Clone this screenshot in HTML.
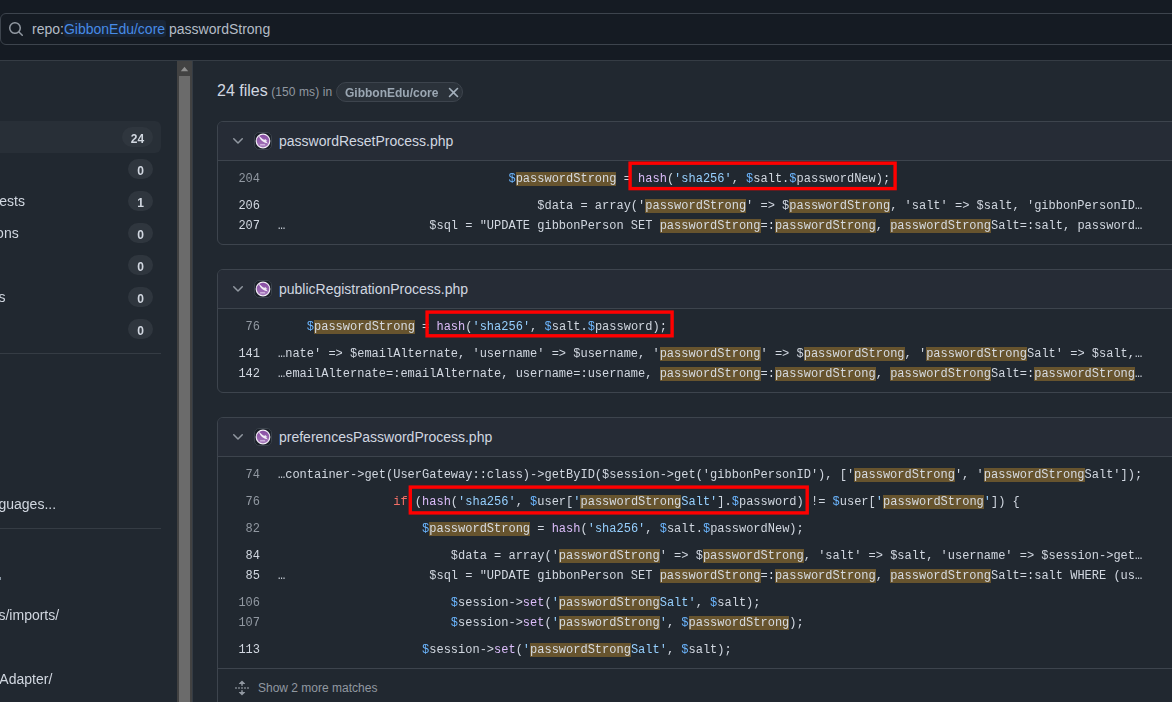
<!DOCTYPE html>
<html lang="en">
<head>
<meta charset="utf-8">
<title>Code search results</title>
<style>
*{box-sizing:border-box;margin:0;padding:0}
html,body{width:1172px;height:702px;overflow:hidden;background:#212830}
body{position:relative;font-family:"Liberation Sans",Arial,sans-serif;font-size:14px;color:#d1d7e0}
.abs{position:absolute}
/* header */
#hdr{left:0;top:0;width:1172px;height:61px;background:#151b23;border-bottom:1px solid #353c44}
#search{left:0;top:13px;width:1400px;height:32px;border:1px solid #3d444d;border-radius:6px;background:#151b23}
#qtext{left:32px;top:13px;height:32px;line-height:32px;font-size:14px;white-space:pre;color:#b4bcc6}
#qtext .tok{color:#478be6}
#tokbg{left:63.5px;top:20px;width:102px;height:17px;border-radius:3px;background:#192536}
/* sidebar */
#sel{left:-100px;top:121px;width:261px;height:32px;border-radius:6px;background:#282f37}
.cnt{height:20px;border-radius:10px;background:#2f363e}
.cnt span{display:block;line-height:20px;color:#d1d7e0;font-size:12px;font-weight:bold;text-align:center;will-change:transform;transform:translateY(1.5px)}
.lbl{white-space:nowrap;font-size:14px;line-height:20px;color:#d1d7e0;text-align:right;will-change:transform;transform:translateY(-0.4px)}
.hr{height:1px;background:#353c44}
/* scrollbar */
#track{left:177px;top:61px;width:15px;height:641px;background:#424242}
#thumb{left:179px;top:76px;width:11px;height:640px;background:#6b6b6b}
#vline{left:192px;top:61px;width:1px;height:641px;background:#353c44}
/* results */
.box{left:217px;width:1000px;border:1px solid #3d444d;border-radius:6px}
.bh{left:0;top:0;width:100%;height:39px;border-bottom:1px solid #3d444d;background:#262c36;border-radius:5px 5px 0 0}
.fname{left:61px;top:9px;line-height:20px;font-size:14px;color:#d1d7e0;white-space:nowrap}
.ln,.cl{will-change:transform}
.ln{left:0;width:42px;text-align:right;font:12px/20px "Liberation Mono",monospace;color:#d1d7e0}
.ln.d{color:#9198a1}
.cl{left:60px;white-space:pre;font:12px/20px "Liberation Mono",monospace;color:#d1d7e0}
.cl mark{background:#67542e;color:#d6dbe2}
.b{color:#6cb6ff}.p{color:#dcbdfb}.s{color:#96d0ff}.k{color:#f47067}
.red{border:3px solid #ff0000}
</style>
</head>
<body>
<!-- header -->
<div id="hdr" class="abs"></div>
<div id="search" class="abs"></div>
<svg class="abs" style="left:8px;top:21px" width="16" height="16" viewBox="0 0 16 16"><path fill="#9198a1" d="M10.68 11.74a6 6 0 0 1-7.922-8.982 6 6 0 0 1 8.982 7.922l3.04 3.04a.749.749 0 0 1-.326 1.275.749.749 0 0 1-.734-.215ZM11.5 7a4.499 4.499 0 1 0-8.997 0A4.499 4.499 0 0 0 11.5 7Z"/></svg>
<div id="tokbg" class="abs"></div>
<div id="qtext" class="abs">repo:<span class="tok">GibbonEdu/core</span> passwordStrong</div>

<!-- sidebar -->
<div id="sel" class="abs"></div>
<div class="abs lbl" style="right:1147.5px;top:191px">Pull requests</div>
<div class="abs lbl" style="right:1153.5px;top:223px">Discussions</div>
<div class="abs lbl" style="right:1167px;top:287px">Packages</div>
<div class="abs cnt" style="left:122px;top:127px;width:31px"><span>24</span></div>
<div class="abs cnt" style="left:128px;top:159px;width:25px"><span>0</span></div>
<div class="abs cnt" style="left:128px;top:191px;width:25px"><span>1</span></div>
<div class="abs cnt" style="left:128px;top:223px;width:25px"><span>0</span></div>
<div class="abs cnt" style="left:128px;top:255px;width:25px"><span>0</span></div>
<div class="abs cnt" style="left:128px;top:287px;width:25px"><span>0</span></div>
<div class="abs cnt" style="left:128px;top:319px;width:25px"><span>0</span></div>
<div class="abs hr" style="left:-100px;top:353px;width:261px"></div>
<div class="abs lbl" style="right:1116px;top:494px">More languages...</div>
<div class="abs hr" style="left:-100px;top:528px;width:261px"></div>
<div class="abs lbl" style="right:1173px;top:566px">src/</div>
<div class="abs" style="left:0;top:577px;width:1px;height:3px;background:#8a96a2"></div>
<div class="abs lbl" style="right:1113px;top:605px">resources/imports/</div>
<div class="abs lbl" style="right:1120px;top:669px">src/Database/Adapter/</div>

<!-- scrollbar -->
<div id="track" class="abs"></div>
<div id="thumb" class="abs"></div>
<svg class="abs" style="left:177px;top:61px" width="15" height="15" viewBox="0 0 15 15"><path fill="#8f8f8f" d="M3.8 10.2 L7.5 5.7 L11.2 10.2 Z"/></svg>
<div id="vline" class="abs"></div>

<!-- results summary -->
<div class="abs" style="left:217px;top:79px;line-height:24px;white-space:nowrap"><span style="font-size:16px;color:#d1d7e0">24 files</span><span style="font-size:12px;color:#9198a1;letter-spacing:.1px"> (150 ms) in</span></div>
<div class="abs" style="left:336px;top:82px;width:127px;height:20px;border:1px solid #3d444d;border-radius:10px;background:#2b323a"></div>
<div class="abs" style="left:345px;top:82px;line-height:20px;font-size:12px;font-weight:bold;color:#9ba7b3;white-space:nowrap;will-change:transform;transform:translateY(0.5px)">GibbonEdu/core</div>
<svg class="abs" style="left:444.85px;top:83.9px" width="17" height="17" viewBox="0 0 16 16"><path fill="#a3afbb" d="M3.72 3.72a.75.75 0 0 1 1.06 0L8 6.94l3.22-3.22a.749.749 0 0 1 1.275.326.749.749 0 0 1-.215.734L9.06 8l3.22 3.22a.749.749 0 0 1-.326 1.275.749.749 0 0 1-.734-.215L8 9.06l-3.22 3.22a.751.751 0 0 1-1.042-.018.751.751 0 0 1-.018-1.042L6.94 8 3.72 4.78a.75.75 0 0 1 0-1.06Z"/></svg>

<!-- BOX1 -->
<div class="abs box" style="top:121px;height:124px">
<div class="abs bh"></div><svg class="abs" style="left:12px;top:11px" width="16" height="16" viewBox="0 0 16 16"><path fill="#9198a1" d="M12.78 5.22a.749.749 0 0 1 0 1.06l-4.25 4.25a.749.749 0 0 1-1.06 0L3.22 6.28a.749.749 0 1 1 1.06-1.06L8 8.939l3.72-3.719a.749.749 0 0 1 1.06 0Z"/></svg><svg class="abs" style="left:36px;top:10px" width="18" height="18" viewBox="0 0 18 18"><defs><linearGradient id="gP121" x1="0" y1="0" x2="0" y2="1"><stop offset="0" stop-color="#874aa2"/><stop offset="1" stop-color="#a67abb"/></linearGradient></defs><rect x="0.5" y="0.5" width="17" height="17" rx="4.5" fill="#1b2129" stroke="#3a424b"/><circle cx="9" cy="9" r="6.800" fill="url(#gP121)" stroke="#f1ebf5" stroke-width="1.200"/><path d="M4.700 3.800C6.600 5 8 6.600 9.300 7.600C10.300 7.900 11.200 7.600 12.200 7.100L11.700 8.200L13.300 8.400L12.200 9.400C12.800 10.100 13.400 10.800 14 11.400C10 10.900 6.400 8.600 4.700 3.800Z" fill="#f2edf6"/><rect x="6" y="12.100" width="5.200" height="1.300" rx=".5" fill="#cdb0dc"/></svg><div class="abs fname">passwordResetProcess.php</div>
<div class="abs ln d" style="top:47px">204</div><div class="abs cl" style="top:47px">                                <span class="b">$</span><mark>passwordStrong</mark> = <span class="p">hash</span>(<span class="s">'sha256'</span>, <span class="b">$</span>salt.<span class="b">$</span>passwordNew);</div>
<div class="abs ln" style="top:74px">206</div><div class="abs cl" style="top:74px">                                    $data = array('<mark>passwordStrong</mark>' =&gt; $<mark>passwordStrong</mark>, 'salt' =&gt; $salt, 'gibbonPersonID…</div>
<div class="abs ln" style="top:94px">207</div><div class="abs cl" style="top:94px">…                    $sql = "UPDATE gibbonPerson SET <mark>passwordStrong</mark>=:<mark>passwordStrong</mark>, <mark>passwordStrong</mark>Salt=:salt, password…</div>
</div>
<!-- /BOX1 -->
<!-- BOX2 -->
<div class="abs box" style="top:269px;height:124px">
<div class="abs bh"></div><svg class="abs" style="left:12px;top:11px" width="16" height="16" viewBox="0 0 16 16"><path fill="#9198a1" d="M12.78 5.22a.749.749 0 0 1 0 1.06l-4.25 4.25a.749.749 0 0 1-1.06 0L3.22 6.28a.749.749 0 1 1 1.06-1.06L8 8.939l3.72-3.719a.749.749 0 0 1 1.06 0Z"/></svg><svg class="abs" style="left:36px;top:10px" width="18" height="18" viewBox="0 0 18 18"><defs><linearGradient id="gP269" x1="0" y1="0" x2="0" y2="1"><stop offset="0" stop-color="#874aa2"/><stop offset="1" stop-color="#a67abb"/></linearGradient></defs><rect x="0.5" y="0.5" width="17" height="17" rx="4.5" fill="#1b2129" stroke="#3a424b"/><circle cx="9" cy="9" r="6.800" fill="url(#gP269)" stroke="#f1ebf5" stroke-width="1.200"/><path d="M4.700 3.800C6.600 5 8 6.600 9.300 7.600C10.300 7.900 11.200 7.600 12.200 7.100L11.700 8.200L13.300 8.400L12.200 9.400C12.800 10.100 13.400 10.800 14 11.400C10 10.900 6.400 8.600 4.700 3.800Z" fill="#f2edf6"/><rect x="6" y="12.100" width="5.200" height="1.300" rx=".5" fill="#cdb0dc"/></svg><div class="abs fname">publicRegistrationProcess.php</div>
<div class="abs ln d" style="top:47px">76</div><div class="abs cl" style="top:47px">    <span class="b">$</span><mark>passwordStrong</mark> = <span class="p">hash</span>(<span class="s">'sha256'</span>, <span class="b">$</span>salt.<span class="b">$</span>password);</div>
<div class="abs ln" style="top:74px">141</div><div class="abs cl" style="top:74px">…nate' =&gt; $emailAlternate, 'username' =&gt; $username, '<mark>passwordStrong</mark>' =&gt; $<mark>passwordStrong</mark>, '<mark>passwordStrong</mark>Salt' =&gt; $salt,…</div>
<div class="abs ln" style="top:94px">142</div><div class="abs cl" style="top:94px">…emailAlternate=:emailAlternate, username=:username, <mark>passwordStrong</mark>=:<mark>passwordStrong</mark>, <mark>passwordStrong</mark>Salt=:<mark>passwordStrong</mark>…</div>
</div>
<!-- /BOX2 -->
<!-- BOX3 -->
<div class="abs box" style="top:417px;height:320px">
<div class="abs bh"></div><svg class="abs" style="left:12px;top:11px" width="16" height="16" viewBox="0 0 16 16"><path fill="#9198a1" d="M12.78 5.22a.749.749 0 0 1 0 1.06l-4.25 4.25a.749.749 0 0 1-1.06 0L3.22 6.28a.749.749 0 1 1 1.06-1.06L8 8.939l3.72-3.719a.749.749 0 0 1 1.06 0Z"/></svg><svg class="abs" style="left:36px;top:10px" width="18" height="18" viewBox="0 0 18 18"><defs><linearGradient id="gP417" x1="0" y1="0" x2="0" y2="1"><stop offset="0" stop-color="#874aa2"/><stop offset="1" stop-color="#a67abb"/></linearGradient></defs><rect x="0.5" y="0.5" width="17" height="17" rx="4.5" fill="#1b2129" stroke="#3a424b"/><circle cx="9" cy="9" r="6.800" fill="url(#gP417)" stroke="#f1ebf5" stroke-width="1.200"/><path d="M4.700 3.800C6.600 5 8 6.600 9.300 7.600C10.300 7.900 11.200 7.600 12.200 7.100L11.700 8.200L13.300 8.400L12.200 9.400C12.800 10.100 13.400 10.800 14 11.400C10 10.900 6.400 8.600 4.700 3.800Z" fill="#f2edf6"/><rect x="6" y="12.100" width="5.200" height="1.300" rx=".5" fill="#cdb0dc"/></svg><div class="abs fname">preferencesPasswordProcess.php</div>
<div class="abs ln d" style="top:47px">74</div><div class="abs cl" style="top:47px">…container-&gt;get(UserGateway::class)-&gt;getByID($session-&gt;get('gibbonPersonID'), ['<mark>passwordStrong</mark>', '<mark>passwordStrong</mark>Salt']);</div>
<div class="abs ln d" style="top:74px">76</div><div class="abs cl" style="top:74px">                <span class="k">if</span> (<span class="p">hash</span>(<span class="s">'sha256'</span>, <span class="b">$</span>user[<span class="s">'<mark>passwordStrong</mark>Salt'</span>].<span class="b">$</span>password) != <span class="b">$</span>user[<span class="s">'<mark>passwordStrong</mark>'</span>]) {</div>
<div class="abs ln d" style="top:101px">82</div><div class="abs cl" style="top:101px">                    <span class="b">$</span><mark>passwordStrong</mark> = <span class="p">hash</span>(<span class="s">'sha256'</span>, <span class="b">$</span>salt.<span class="b">$</span>passwordNew);</div>
<div class="abs ln" style="top:128px">84</div><div class="abs cl" style="top:128px">                        $data = array('<mark>passwordStrong</mark>' =&gt; $<mark>passwordStrong</mark>, 'salt' =&gt; $salt, 'username' =&gt; $session-&gt;get…</div>
<div class="abs ln" style="top:148px">85</div><div class="abs cl" style="top:148px">…                    $sql = "UPDATE gibbonPerson SET <mark>passwordStrong</mark>=:<mark>passwordStrong</mark>, <mark>passwordStrong</mark>Salt=:salt WHERE (us…</div>
<div class="abs ln d" style="top:175px">106</div><div class="abs cl" style="top:175px">                        <span class="b">$</span>session-&gt;<span class="p">set</span>(<span class="s">'<mark>passwordStrong</mark>Salt'</span>, <span class="b">$</span>salt);</div>
<div class="abs ln d" style="top:195px">107</div><div class="abs cl" style="top:195px">                        <span class="b">$</span>session-&gt;<span class="p">set</span>(<span class="s">'<mark>passwordStrong</mark>'</span>, <span class="b">$</span><mark>passwordStrong</mark>);</div>
<div class="abs ln" style="top:222px">113</div><div class="abs cl" style="top:222px">                    <span class="b">$</span>session-&gt;<span class="p">set</span>(<span class="s">'<mark>passwordStrong</mark>Salt'</span>, <span class="b">$</span>salt);</div>
<div class="abs" style="left:0;top:250px;width:100%;height:1px;background:#3d444d"></div><svg class="abs" style="left:16px;top:262px" width="16" height="16" viewBox="0 0 16 16"><path fill="#9198a1" d="m8.177.677 2.896 2.896a.25.25 0 0 1-.177.427H8.75v1.25a.75.75 0 0 1-1.500 0V4H5.104a.25.25 0 0 1-.177-.427L7.823.677a.25.25 0 0 1 .354 0ZM7.250 10.750a.75.75 0 0 1 1.500 0V12h2.146a.25.25 0 0 1 .177.427l-2.896 2.896a.25.25 0 0 1-.354 0l-2.896-2.896A.25.25 0 0 1 5.104 12H7.250v-1.250Zm-5-2a.75.75 0 0 0 0-1.500h-.5a.75.75 0 0 0 0 1.500h.5ZM6 8a.75.75 0 0 1-.75.75h-.5a.75.75 0 0 1 0-1.500h.5A.75.75 0 0 1 6 8Zm2.250.75a.75.75 0 0 0 0-1.500h-.5a.75.75 0 0 0 0 1.500h.5ZM12 8a.75.75 0 0 1-.75.75h-.5a.75.75 0 0 1 0-1.500h.5A.75.75 0 0 1 12 8Zm2.250.75a.75.75 0 0 0 0-1.500h-.5a.75.75 0 0 0 0 1.500h.5Z"/></svg><div class="abs" style="left:40px;top:260px;line-height:20px;font-size:12px;color:#9198a1;white-space:nowrap">Show 2 more matches</div></div>
<svg class="abs" style="left:0;top:0" width="1172" height="702" viewBox="0 0 1172 702" fill="none" stroke="#ff0000" stroke-width="3.400"><rect x="630.100" y="163.200" width="265" height="25.400"/><rect x="427.100" y="312.100" width="245" height="23.700"/><rect x="410.300" y="487.100" width="396.900" height="25.800"/></svg>
<!-- /BOX3 -->
</body>
</html>
